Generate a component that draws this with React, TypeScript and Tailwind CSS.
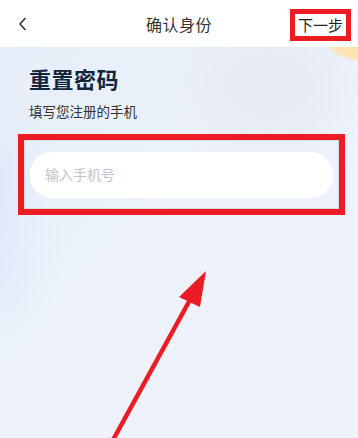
import React from "react";

export default function App() {
  const font = { fontFamily: '"Noto Sans CJK SC", "Noto Sans", sans-serif' };
  return (
    <div
      className="relative w-[358px] h-[438px] overflow-hidden bg-gradient-to-br from-[#e6eef9] via-[#edf2fb] to-[#eef3fb]"
      style={font}
    >
      {/* soft background blobs */}
      <div className="absolute right-[20px] top-[30px] w-[140px] h-[110px] rounded-full bg-[#e6eaf2] blur-[22px]" />
      <div className="absolute left-[312px] top-[-40px] w-[100px] h-[100px] rounded-full bg-[#fde3b2] blur-[1px]" />
      <div className="absolute left-[-50px] top-[130px] w-[70px] h-[180px] rounded-full bg-[#dce8f8] blur-[18px] opacity-80" />

      {/* header */}
      <div className="relative z-10 h-[47px] bg-white flex items-center justify-between pl-[17px] pr-[7px]">
        <svg width="12" height="14" viewBox="0 0 12 14" className="mt-[1px]">
          <path d="M8 1.5 L3 7 L8 12.5" fill="none" stroke="#333" strokeWidth="1.6" strokeLinecap="round" strokeLinejoin="round" />
        </svg>
        <div className="absolute left-0 right-0 top-0 h-[47px] flex items-center justify-center pointer-events-none">
          <span className="text-[16px] text-[#333] tracking-[0.5px]">确认身份</span>
        </div>
        <div className="border-[5px] border-[#ec1c24] bg-white h-[32px] w-[61px] flex items-center justify-center mt-[2px]">
          <span className="text-[15px] text-[#222] leading-none">下一步</span>
        </div>
      </div>

      {/* content */}
      <div className="relative z-10 px-[29px] pt-[16px]">
        <h1 className="text-[22px] font-bold text-[#12263f] leading-[30px] tracking-[0.5px]">重置密码</h1>
        <p className="mt-[9px] text-[13.5px] text-[#333] leading-[18px]">填写您注册的手机</p>
      </div>

      <div className="relative z-10 mx-[18px] mt-[14px] border-[6px] border-[#ec1c24] w-[327px] h-[81px]">
        <div className="h-full w-full border border-[#d8dbe0] flex items-center px-[5px]">
          <div className="h-[46px] w-full bg-white rounded-[22px] flex items-center pl-[15px]">
            <span className="text-[14px] text-[#c4c4c4]">输入手机号</span>
          </div>
        </div>
      </div>

      {/* annotation arrow */}
      <svg className="absolute left-0 top-0 z-20" width="358" height="438" viewBox="0 0 358 438">
        <line x1="113" y1="440" x2="191" y2="298" stroke="#ec1c24" strokeWidth="4.5" />
        <polygon points="206,271 179,297 200,307" fill="#ec1c24" />
      </svg>
    </div>
  );
}
